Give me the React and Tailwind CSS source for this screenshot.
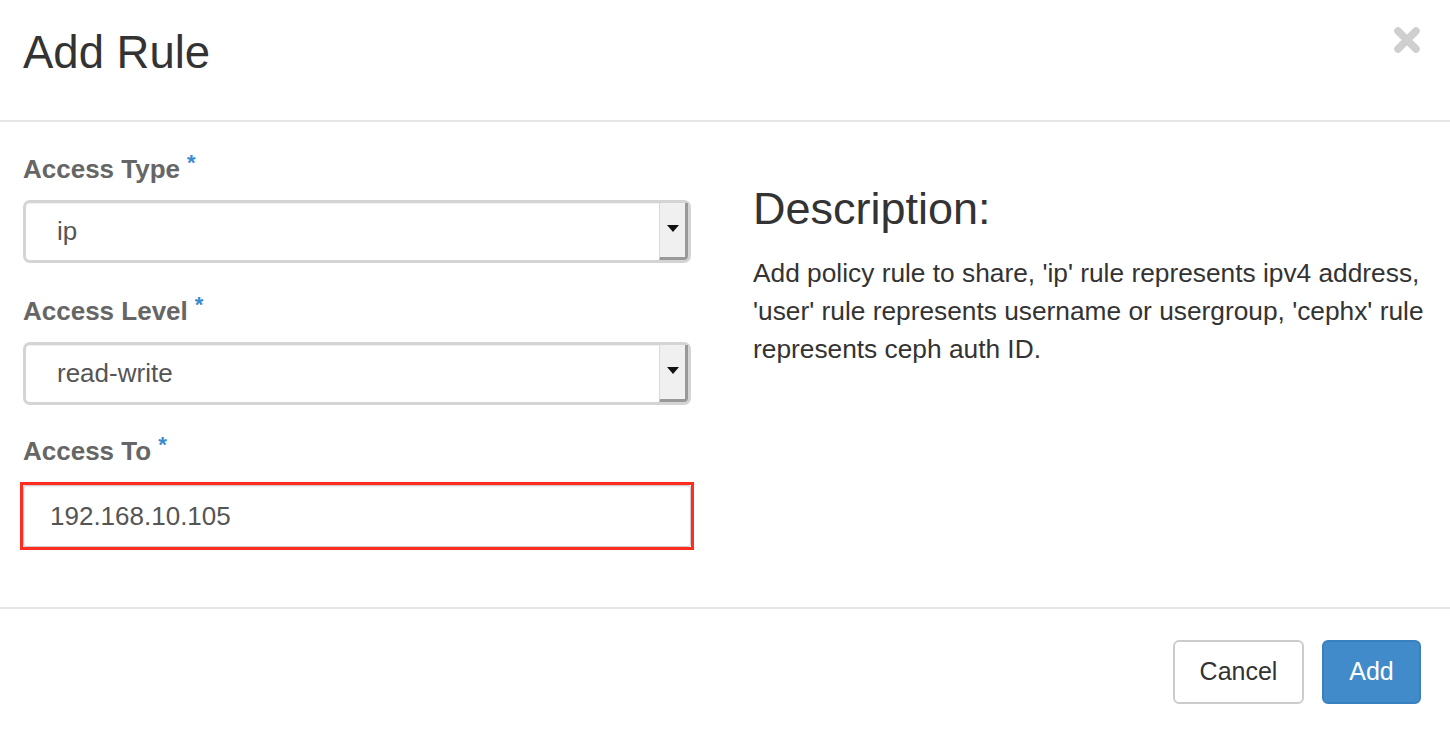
import React from "react";

const font = { fontFamily: '"Liberation Sans", Arial, Helvetica, sans-serif' };

function Label({ children }) {
  return (
    <div className="flex items-start h-[50px] pt-[1px]">
      <span className="text-[26px] font-bold text-[#666] leading-[36px]">{children}</span>
      <span className="text-[22px] font-bold text-[#3a8ad0] leading-[22px] ml-[7px] mt-[1px]">*</span>
    </div>
  );
}

function Select({ value }) {
  return (
    <div className="relative h-[63px] w-[668px] rounded-[7px] border-[3px] border-[#d4d4d4] bg-white flex items-center shadow-[inset_0_1px_1px_rgba(0,0,0,0.06)]">
      <span className="pl-[31px] text-[26px] text-[#555]">{value}</span>
      <div className="absolute right-0 top-0 bottom-0 w-[29px] bg-[#f0f0f0] border-l border-[#d8d8d8] border-r-[3px] border-b-[3px] border-r-[#999] border-b-[#999] rounded-br-[4px] flex items-center justify-center">
        <svg width="12" height="7" viewBox="0 0 12 7" className="mt-[-3px]">
          <polygon points="0,0 12,0 6,7" fill="#111" />
        </svg>
      </div>
    </div>
  );
}

export default function App() {
  return (
    <div className="w-[1450px] h-[732px] bg-white flex flex-col" style={font}>
      <div className="h-[122px] border-b-[2px] border-[#e5e5e5] flex items-start justify-between pl-[23px] pr-[29px]">
        <h4 className="text-[45.5px] text-[#333] leading-[52px] mt-[27px] font-normal">Add Rule</h4>
        <svg width="28" height="28" viewBox="0 0 28 28" className="mt-[26px]">
          <line x1="5" y1="5" x2="23" y2="23" stroke="#cfcfcf" strokeWidth="7.5" strokeLinecap="round" />
          <line x1="23" y1="5" x2="5" y2="23" stroke="#cfcfcf" strokeWidth="7.5" strokeLinecap="round" />
        </svg>
      </div>
      <div className="h-[487px] border-b-[2px] border-[#e5e5e5] flex pl-[23px]">
        <div className="w-[668px] pt-[28px] flex flex-col">
          <Label>Access Type</Label>
          <Select value="ip" />
          <div className="h-[29px]" />
          <Label>Access Level</Label>
          <Select value="read-write" />
          <div className="h-[27px]" />
          <Label>Access To</Label>
          <div className="-ml-[3px] w-[674px] h-[68px] border-[3px] border-[#ff2d20] p-0">
            <div className="h-full w-full border border-[#ccc] rounded-[3px] flex items-center shadow-[inset_0_1px_2px_rgba(0,0,0,0.08)]">
              <span className="pl-[26px] text-[26px] text-[#555]">192.168.10.105</span>
            </div>
          </div>
        </div>
        <div className="ml-[62px] w-[680px] pt-[59px]">
          <h3 className="text-[45px] text-[#333] leading-[56px] font-normal">Description:</h3>
          <p className="mt-[17px] text-[26.3px] text-[#333] leading-[38px]">
            Add policy rule to share, 'ip' rule represents ipv4 address, 'user' rule represents username or usergroup, 'cephx' rule represents ceph auth ID.
          </p>
        </div>
      </div>
      <div className="flex justify-end items-start pt-[31px] pr-[29px] gap-[18px]">
        <button className="w-[131px] h-[64px] rounded-[6px] border-[2px] border-[#ccc] bg-white text-[25px] text-[#333]">Cancel</button>
        <button className="w-[99px] h-[64px] rounded-[6px] border-[2px] border-[#3a80c0] bg-[#428bca] text-[25px] text-white">Add</button>
      </div>
    </div>
  );
}
